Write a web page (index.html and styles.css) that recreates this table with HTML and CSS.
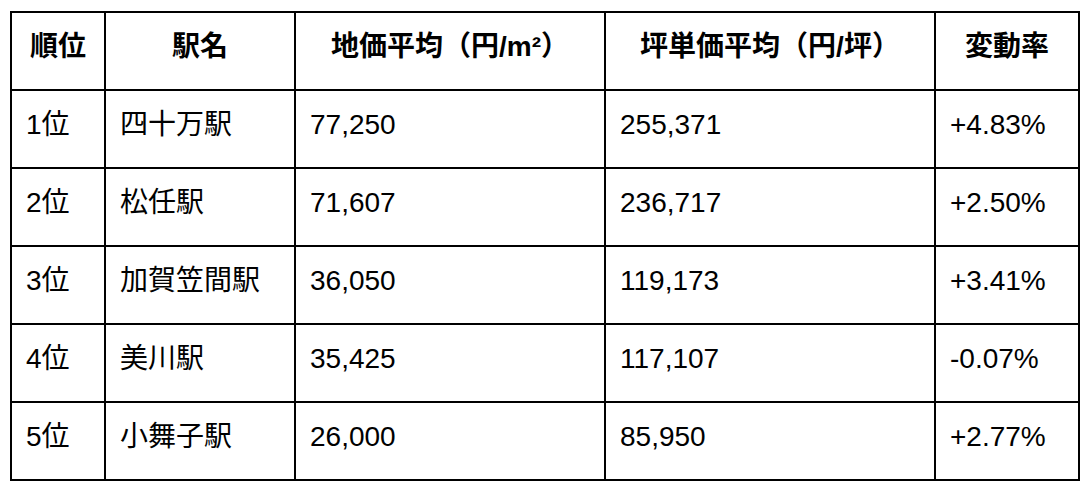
FILE: index.html
```html
<!DOCTYPE html>
<html lang="ja">
<head>
<meta charset="utf-8">
<link rel="stylesheet" href="styles.css">
</head>
<body>
<div class="wrap">
<table class="ranking">
  <colgroup>
    <col class="c-rank"><col class="c-name"><col class="c-price"><col class="c-tsubo"><col class="c-rate">
  </colgroup>
  <thead>
    <tr><th>順位</th><th>駅名</th><th>地価平均（円/m²）</th><th>坪単価平均（円/坪）</th><th>変動率</th></tr>
  </thead>
  <tbody>
    <tr><td>1位</td><td>四十万駅</td><td>77,250</td><td>255,371</td><td>+4.83%</td></tr>
    <tr><td>2位</td><td>松任駅</td><td>71,607</td><td>236,717</td><td>+2.50%</td></tr>
    <tr><td>3位</td><td>加賀笠間駅</td><td>36,050</td><td>119,173</td><td>+3.41%</td></tr>
    <tr><td>4位</td><td>美川駅</td><td>35,425</td><td>117,107</td><td>-0.07%</td></tr>
    <tr><td>5位</td><td>小舞子駅</td><td>26,000</td><td>85,950</td><td>+2.77%</td></tr>
  </tbody>
</table>
</div>
</body>
</html>
```

FILE: styles.css
```css
html, body {
  margin: 0;
  padding: 0;
  background: #fff;
}
.wrap {
  padding: 11px 0 0 10px;
}
.ranking {
  border-collapse: collapse;
  table-layout: fixed;
  width: 1068px;
  font-family: "Liberation Sans", "Noto Sans CJK JP", sans-serif;
  font-size: 28px;
  color: #000;
}
.c-rank { width: 94px; }
.c-name { width: 190px; }
.c-price { width: 310px; }
.c-tsubo { width: 330px; }
.c-rate { width: 144px; }
.ranking th,
.ranking td {
  border: 2px solid #000;
  height: 78px;
  box-sizing: border-box;
  padding: 0 14px 8px 14px;
  line-height: 34px;
  white-space: nowrap;
  vertical-align: middle;
}
.ranking th {
  font-weight: bold;
  text-align: center;
}
.ranking td {
  text-align: left;
  font-weight: normal;
}
```
